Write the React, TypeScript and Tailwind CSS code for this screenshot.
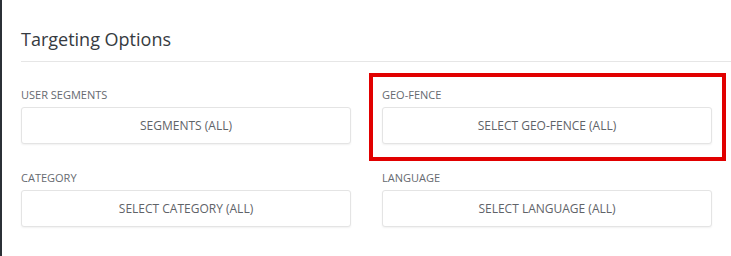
import React from 'react';

interface TargetField {
  label: string;
  placeholder: string;
}

const fields: TargetField[] = [
  { label: 'User Segments', placeholder: 'Segments (All)' },
  { label: 'Geo-Fence', placeholder: 'Select Geo-Fence (All)' },
  { label: 'Category', placeholder: 'Select Category (All)' },
  { label: 'Language', placeholder: 'Select Language (All)' },
];

const FieldSelect: React.FC<{ field: TargetField }> = ({ field }) => (
  <div className="flex flex-col">
    <label className="text-[11px] leading-[14px] uppercase text-[#666a70] mb-[5px]">{field.label}</label>
    <button className="h-[37px] w-full bg-white border border-[#e4e4e4] rounded-[3px] shadow-[0_1px_2px_rgba(0,0,0,0.06)] text-[12px] uppercase text-[#5f6368]">
      {field.placeholder}
    </button>
  </div>
);

export default function App() {
  return (
    <div className="relative w-[731px] h-[256px] bg-white border-l-2 border-[#2b3036] font-['Open_Sans','Liberation_Sans',sans-serif] overflow-hidden">
      <div className="pl-[19px]">
        {/* Header */}
        <div className="pt-[28px] pb-[10px] border-b border-[#e6e6e6]">
          <h2 className="text-[18px] leading-[23px] text-[#363b41]">Targeting Options</h2>
        </div>

        {/* Fields */}
        <div className="grid grid-cols-[330px_330px] gap-x-[31px] gap-y-[27px] pt-[26px]">
          {fields.map((f) => (
            <FieldSelect key={f.label} field={f} />
          ))}
        </div>
      </div>

      {/* Highlight annotation */}
      <div className="absolute left-[367px] top-[73px] w-[357px] h-[88px] border-4 border-[#e10000]" />
    </div>
  );
}
